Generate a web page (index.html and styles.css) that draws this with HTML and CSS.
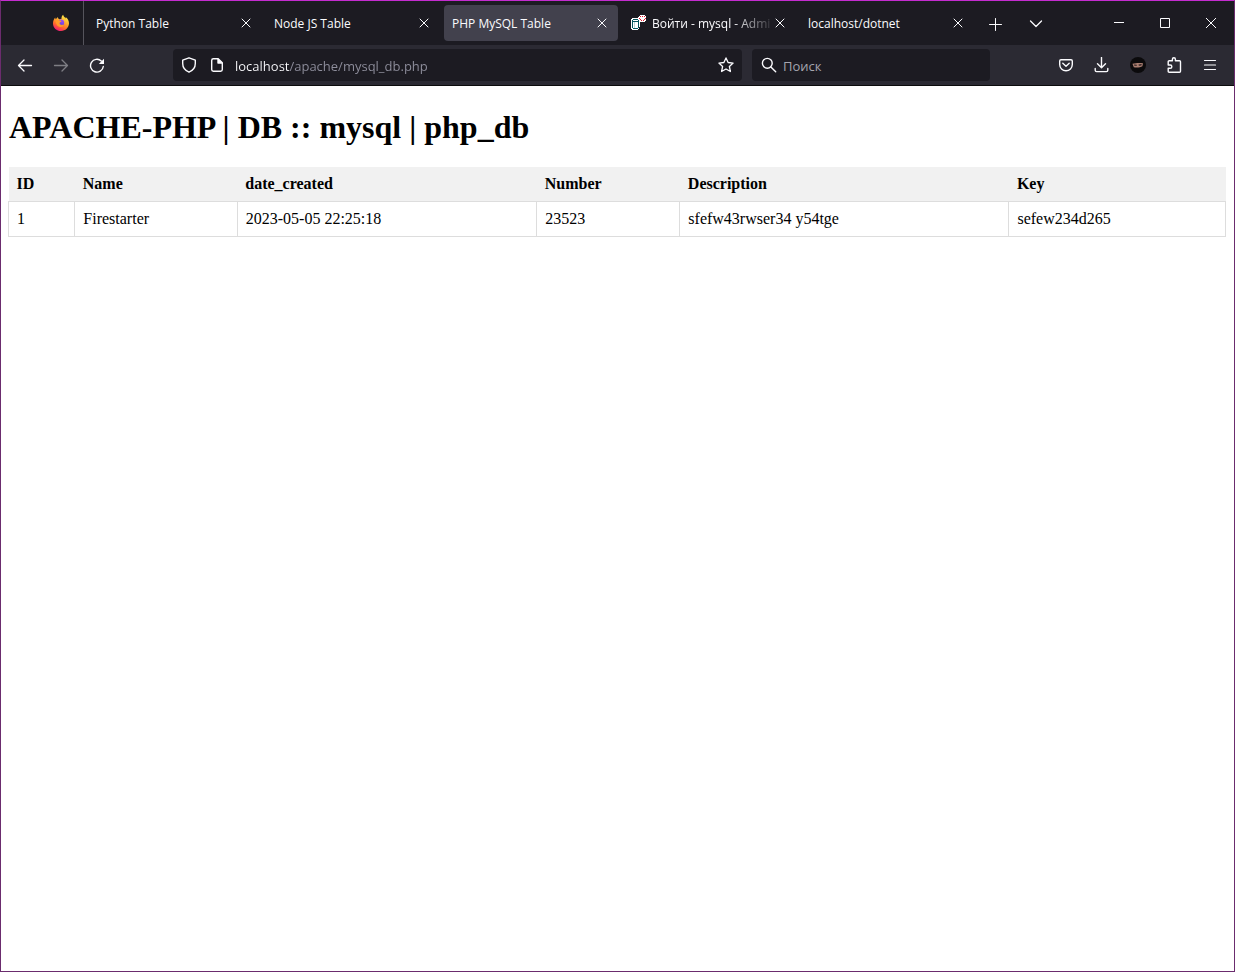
FILE: index.html
```html
<!DOCTYPE html>
<html lang="ru">
<head>
<meta charset="utf-8">
<title>PHP MySQL Table</title>
<link rel="stylesheet" href="styles.css">
</head>
<body>
<div class="window">
  <header class="tab-strip">
    <div class="pinned">
      <button class="icon-button" type="button" aria-label="Firefox View">
        <svg width="18" height="18" viewBox="0 0 18 18">
          <defs>
            <linearGradient id="fire" x1="0.8" y1="0" x2="0.3" y2="1">
              <stop offset="0" stop-color="#fff44f"/>
              <stop offset="0.4" stop-color="#ffb02e"/>
              <stop offset="0.7" stop-color="#ff6a2b"/>
              <stop offset="1" stop-color="#f0147a"/>
            </linearGradient>
            <linearGradient id="globe" x1="0.7" y1="0" x2="0.3" y2="1">
              <stop offset="0" stop-color="#a44cf5"/>
              <stop offset="1" stop-color="#5a3fd6"/>
            </linearGradient>
          </defs>
          <path fill="url(#fire)" d="M1 9.4C1 7 1.800 5 3.200 3.400c0 .8.300 1.400.700 1.900C4.300 4.300 5.200 3.600 6 3.200c0 .9.400 1.700 1.600 2.100C8.400 4.700 9 4.600 9.600 4.700 9.300 3.200 10 1.500 11.200.800c.2 1.900 1.500 2.500 2.500 3.600.1-.5.100-1-.1-1.500C15.800 4.400 17 6.700 17 9.300 17 13.700 13.400 17 9 17S1 13.800 1 9.400z"/>
          <circle cx="8.900" cy="8.700" r="3.300" fill="url(#globe)"/>
          <path fill="#ff9a2a" d="M3.600 6.300c1.500-.9 2.900-.7 4.200.2 1 .1 1.700.3 1.600.8-.1.600-1 .8-1.600 1.100-.3.800-.2 1.600.6 2.200 1.200.8 2.200.2 3.300.200.500.7-1.300 2.500-3.500 2.300-2.900-.3-4.600-3.300-4.600-6.800z"/>
        </svg>
      </button>
    </div>
    <nav class="tabs" role="tablist" aria-label="Вкладки">
      <div class="tab">
        <button class="tab-title" type="button" role="tab" aria-selected="false">Python Table</button>
        <button class="tab-close" type="button" aria-label="Закрыть"><svg width="10" height="10" viewBox="0 0 10 10"><path d="M1 1l8 8M9 1l-8 8"/></svg></button>
      </div>
      <div class="tab">
        <button class="tab-title" type="button" role="tab" aria-selected="false">Node JS Table</button>
        <button class="tab-close" type="button" aria-label="Закрыть"><svg width="10" height="10" viewBox="0 0 10 10"><path d="M1 1l8 8M9 1l-8 8"/></svg></button>
      </div>
      <div class="tab tab-active">
        <button class="tab-title" type="button" role="tab" aria-selected="true">PHP MySQL Table</button>
        <button class="tab-close" type="button" aria-label="Закрыть"><svg width="10" height="10" viewBox="0 0 10 10"><path d="M1 1l8 8M9 1l-8 8"/></svg></button>
      </div>
      <div class="tab tab-faded">
        <svg class="favicon" width="16" height="16" viewBox="0 0 16 16" shape-rendering="crispEdges">
          <path fill="#fff" d="M2 3h6V2h1V1h1V0h5v1h1v5h-1v1h-5v5h-1v2H8v1H2v-1H1V4h1z"/>
          <path fill="#06555f" d="M3 4h5v1H3zM2 5h1v8H2zM8 5h1v8H8zM3 6h5v1H3zM3 13h5v1H3z"/>
          <path fill="#b9d4d8" d="M4 7h1v6H4z"/>
          <path fill="#e0182d" d="M10 1h1v1h-1zM12 1h1v1h-1zM14 1h1v1h-1zM9 3h1v1H9zM15 3h1v1h-1zM10 4h1v1h-1zM14 4h1v1h-1zM11 5h1v1h-1zM13 5h1v1h-1z"/>
        </svg>
        <button class="tab-title" type="button" role="tab" aria-selected="false">Войти - mysql - Adminer</button>
        <button class="tab-close" type="button" aria-label="Закрыть"><svg width="10" height="10" viewBox="0 0 10 10"><path d="M1 1l8 8M9 1l-8 8"/></svg></button>
      </div>
      <div class="tab">
        <button class="tab-title" type="button" role="tab" aria-selected="false">localhost/dotnet</button>
        <button class="tab-close" type="button" aria-label="Закрыть"><svg width="10" height="10" viewBox="0 0 10 10"><path d="M1 1l8 8M9 1l-8 8"/></svg></button>
      </div>
    </nav>
    <div class="tab-tools">
      <button class="icon-button" type="button" aria-label="Новая вкладка"><svg width="14" height="14" viewBox="0 0 14 14"><path d="M7.500 1.500v12M1.500 7.500h12"/></svg></button>
      <button class="icon-button" type="button" aria-label="Список вкладок"><svg width="14" height="14" viewBox="0 0 14 14"><path stroke-width="1.300" d="M1.500 4l5.500 5.500L12.500 4"/></svg></button>
    </div>
    <div class="window-controls">
      <button class="window-button" type="button" aria-label="Свернуть"><svg width="10" height="10" viewBox="0 0 10 10"><path d="M0 4.500h10"/></svg></button>
      <button class="window-button" type="button" aria-label="Развернуть"><svg width="10" height="10" viewBox="0 0 10 10"><path d="M.5.500h9v9h-9z"/></svg></button>
      <button class="window-button" type="button" aria-label="Закрыть окно"><svg width="10" height="10" viewBox="0 0 10 10"><path d="M0 0l10 10M10 0L0 10"/></svg></button>
    </div>
  </header>

  <div class="toolbar">
    <div class="tool-group">
      <button class="icon-button" type="button" aria-label="Назад"><svg width="16" height="16" viewBox="0 0 16 16"><path stroke-width="1.300" d="M14.500 8.500H1.500M7 3L1.500 8.500 7 14"/></svg></button>
      <button class="icon-button dimmed" type="button" aria-label="Вперёд" disabled><svg width="16" height="16" viewBox="0 0 16 16"><path stroke-width="1.300" d="M1.500 8.500h13M9 3l5.500 5.500L9 14"/></svg></button>
      <button class="icon-button" type="button" aria-label="Обновить"><svg width="16" height="16" viewBox="0 0 16 16"><path stroke-width="1.400" d="M14.300 9.500A6.400 6.400 0 1 1 12.300 4"/><path class="solid" d="M15 1.800v5.200H9.800z"/></svg></button>
    </div>
    <div class="address field">
      <svg width="16" height="16" viewBox="0 0 16 16"><path stroke-width="1.400" d="M8 .8l6.300 2.300v3.500c0 3.800-2.300 7-6.300 8.600C4 13.600 1.700 10.400 1.700 6.600V3.100z"/></svg>
      <svg width="16" height="16" viewBox="0 0 16 16"><path stroke-width="1.400" d="M9.200 1.700H4.400c-.9 0-1.700.8-1.700 1.700v9.200c0 .9.800 1.700 1.700 1.700h7.200c.9 0 1.700-.8 1.700-1.700V5.800zM9 2v4h4"/><path class="solid" d="M9 1.500L13.500 6H9z"/></svg>
      <input class="address-input" type="text" aria-label="Адрес" value="localhost/apache/mysql_db.php">
      <button class="field-button" type="button" aria-label="Добавить в закладки"><svg width="16" height="16" viewBox="0 0 16 16"><path stroke-width="1.300" d="M8 .9l2.100 4.600 5 .6-3.700 3.400 1 5L8 12l-4.400 2.500 1-5L.9 6.100l5-.6z"/></svg></button>
    </div>
    <div class="search field">
      <svg width="16" height="16" viewBox="0 0 16 16"><circle cx="6.300" cy="6.300" r="4.900" stroke-width="1.400"/><path stroke-width="1.400" d="M9.900 9.900l4.800 4.800"/></svg>
      <input class="search-input" type="text" aria-label="Поиск" placeholder="Поиск">
    </div>
    <div class="tool-group tool-group-end">
      <button class="icon-button" type="button" aria-label="Pocket"><svg width="16" height="16" viewBox="0 0 16 16"><path stroke-width="1.400" d="M3 2.700h10c.8 0 1.300.5 1.300 1.300v3.500a6.300 6.300 0 0 1-12.600 0V4c0-.8.500-1.300 1.300-1.300zM4.800 6.300L8 9.300l3.200-3"/></svg></button>
      <button class="icon-button" type="button" aria-label="Загрузки"><svg width="16" height="16" viewBox="0 0 16 16"><path stroke-width="1.400" d="M7.500 .500v10M3.500 6.700l4 4 4-4M1.200 11.500v1.700c0 .8.600 1.400 1.400 1.400h9.800c.8 0 1.400-.6 1.400-1.400v-1.700"/></svg></button>
      <button class="icon-button" type="button" aria-label="Аккаунт"><svg width="16" height="16" viewBox="0 0 16 16"><circle class="ninja-hood" cx="8" cy="8" r="8"/><path class="ninja-face" d="M2.500 6.800c3-.9 7.500-1.100 10.500-.5l-.6 3c-2.300 1.300-6 1.500-8.600.9z"/><path class="ninja-eyes" d="M4 7.400l2.800.3v1l-2.400.1zM8.500 7.600l3.200-.5-.3 1.400-2.500.3z"/></svg></button>
      <button class="icon-button" type="button" aria-label="Расширения"><svg width="16" height="16" viewBox="0 0 16 16"><path stroke-width="1.400" d="M2.200 7V4.800c0-.6.400-1 1-1h3.200V2.300a1.500 1.500 0 0 1 3 0v1.500h4.100c.6 0 1 .4 1 1v9.500c0 .6-.4 1-1 1H3.200c-.6 0-1-.4-1-1v-3h2a1.600 1.600 0 0 0 0-3.300H2.200z"/></svg></button>
      <button class="icon-button" type="button" aria-label="Меню"><svg width="16" height="16" viewBox="0 0 16 16"><path stroke-width="1.200" d="M2.500 3.500h11M2.500 8h11M2.500 12.500h11"/></svg></button>
    </div>
  </div>

  <main class="page">
    <h1 class="page-title">APACHE-PHP | DB :: mysql | php_db</h1>
    <table class="records">
      <thead>
        <tr><th>ID</th><th>Name</th><th>date_created</th><th>Number</th><th>Description</th><th>Key</th></tr>
      </thead>
      <tbody>
        <tr><td>1</td><td>Firestarter</td><td>2023-05-05 22:25:18</td><td>23523</td><td>sfefw43rwser34 y54tge</td><td>sefew234d265</td></tr>
      </tbody>
    </table>
  </main>
</div>
</body>
</html>
```
FILE: styles.css
```css
* { box-sizing: border-box; }

body {
  margin: 0;
  background: #fff;
}

.window {
  display: flex;
  flex-direction: column;
  min-height: 100vh;
  border: 1px solid #6b2c6e;
  border-top-color: #c42ccf;
}

button,
input {
  margin: 0;
  padding: 0;
  border: 0;
  background: none;
  font-family: "Open Sans", "Noto Sans", sans-serif;
}

svg {
  display: block;
  flex: none;
  fill: none;
  stroke: #fbfbfe;
  stroke-linecap: round;
  stroke-linejoin: round;
}

/* Tab strip */
.tab-strip {
  display: flex;
  height: 44px;
  background: #1c1b22;
}

.pinned {
  display: flex;
  justify-content: flex-end;
  width: 83px;
  flex: none;
  padding-right: 4px;
  border-right: 1px solid #55545c;
}

.pinned svg,
.favicon { stroke: none; }

.icon-button {
  display: flex;
  align-items: center;
  justify-content: center;
  width: 36px;
  height: 100%;
}

.tabs {
  display: flex;
  flex: 0 1 892px;
  min-width: 0;
  padding: 4px 0 4px 2px;
}

.tab {
  display: flex;
  align-items: center;
  flex: 1 1 0;
  min-width: 0;
  margin: 0 2px;
  padding: 0 6px 0 8px;
  border-radius: 4px;
}

.tab-active {
  background: #42414d;
}

.favicon { margin-right: 6px; }

.tab-title {
  flex: 1;
  min-width: 0;
  padding-top: 2px;
  overflow: hidden;
  color: #fbfbfe;
  font-size: 12px;
  line-height: 20px;
  text-align: left;
  white-space: nowrap;
}

.tab-faded .tab-title {
  -webkit-mask-image: linear-gradient(90deg, #000 80px, transparent 124px);
  mask-image: linear-gradient(90deg, #000 80px, transparent 124px);
}

.tab-close {
  display: flex;
  align-items: center;
  justify-content: center;
  width: 20px;
  height: 20px;
  flex: none;
}

.tab-tools {
  display: flex;
  gap: 5px;
  padding: 1px 0 0 1px;
}

.window-controls {
  display: flex;
  margin-left: auto;
}

.window-button {
  display: flex;
  align-items: center;
  justify-content: center;
  width: 46px;
}

.window-button svg { stroke-linecap: butt; stroke-linejoin: miter; }

/* Navigation toolbar */
.toolbar {
  display: flex;
  align-items: center;
  height: 41px;
  padding: 0 6px;
  background: #2b2a33;
  border-bottom: 1px solid #0c0c0d;
}

.tool-group {
  display: flex;
  height: 40px;
}

.dimmed svg { opacity: 0.4; }

.solid { fill: #fbfbfe; stroke: none; }

.field {
  display: flex;
  align-items: center;
  height: 32px;
  min-width: 0;
  padding: 0 8px;
  border-radius: 4px;
  background: #1c1b22;
}

.address {
  flex: 1 1 auto;
  gap: 12px;
  margin-left: 58px;
}

.search {
  flex: 0 1 238px;
  gap: 6px;
  margin-left: 10px;
  padding-left: 9px;
}

.address-input,
.search-input {
  flex: 1;
  min-width: 0;
  height: 32px;
  padding-top: 2px;
  outline: 0;
  font-size: 13px;
}

.address-input {
  margin-left: -2px;
  color: transparent;
  background: linear-gradient(90deg, #fbfbfe 55px, #8f8f9d 55px);
  -webkit-background-clip: text;
  background-clip: text;
}

.search-input { color: #fbfbfe; }

.search-input::placeholder { color: #a5a5ae; opacity: 1; }

.tool-group-end { margin-left: 58px; }

.ninja-hood { fill: #0b0a0c; stroke: none; }
.ninja-face { fill: #a97d70; stroke: none; }
.ninja-eyes { fill: #2c1f20; stroke: none; }

/* Page content */
.page {
  flex: 1;
  padding: 22px 8px 8px;
  color: #000;
  font-family: "Liberation Serif", serif;
  font-size: 16px;
  line-height: 18px;
}

.page-title {
  margin: 0 0 21px;
  font-size: 32px;
  line-height: 38px;
}

.records {
  width: calc(100% + 1px);
  margin-left: -1px;
  border-collapse: collapse;
}

.records th,
.records td {
  padding: 8px;
  text-align: left;
}

.records th { background: #f1f1f1; }

.records td { border: 1px solid #ddd; }
```
